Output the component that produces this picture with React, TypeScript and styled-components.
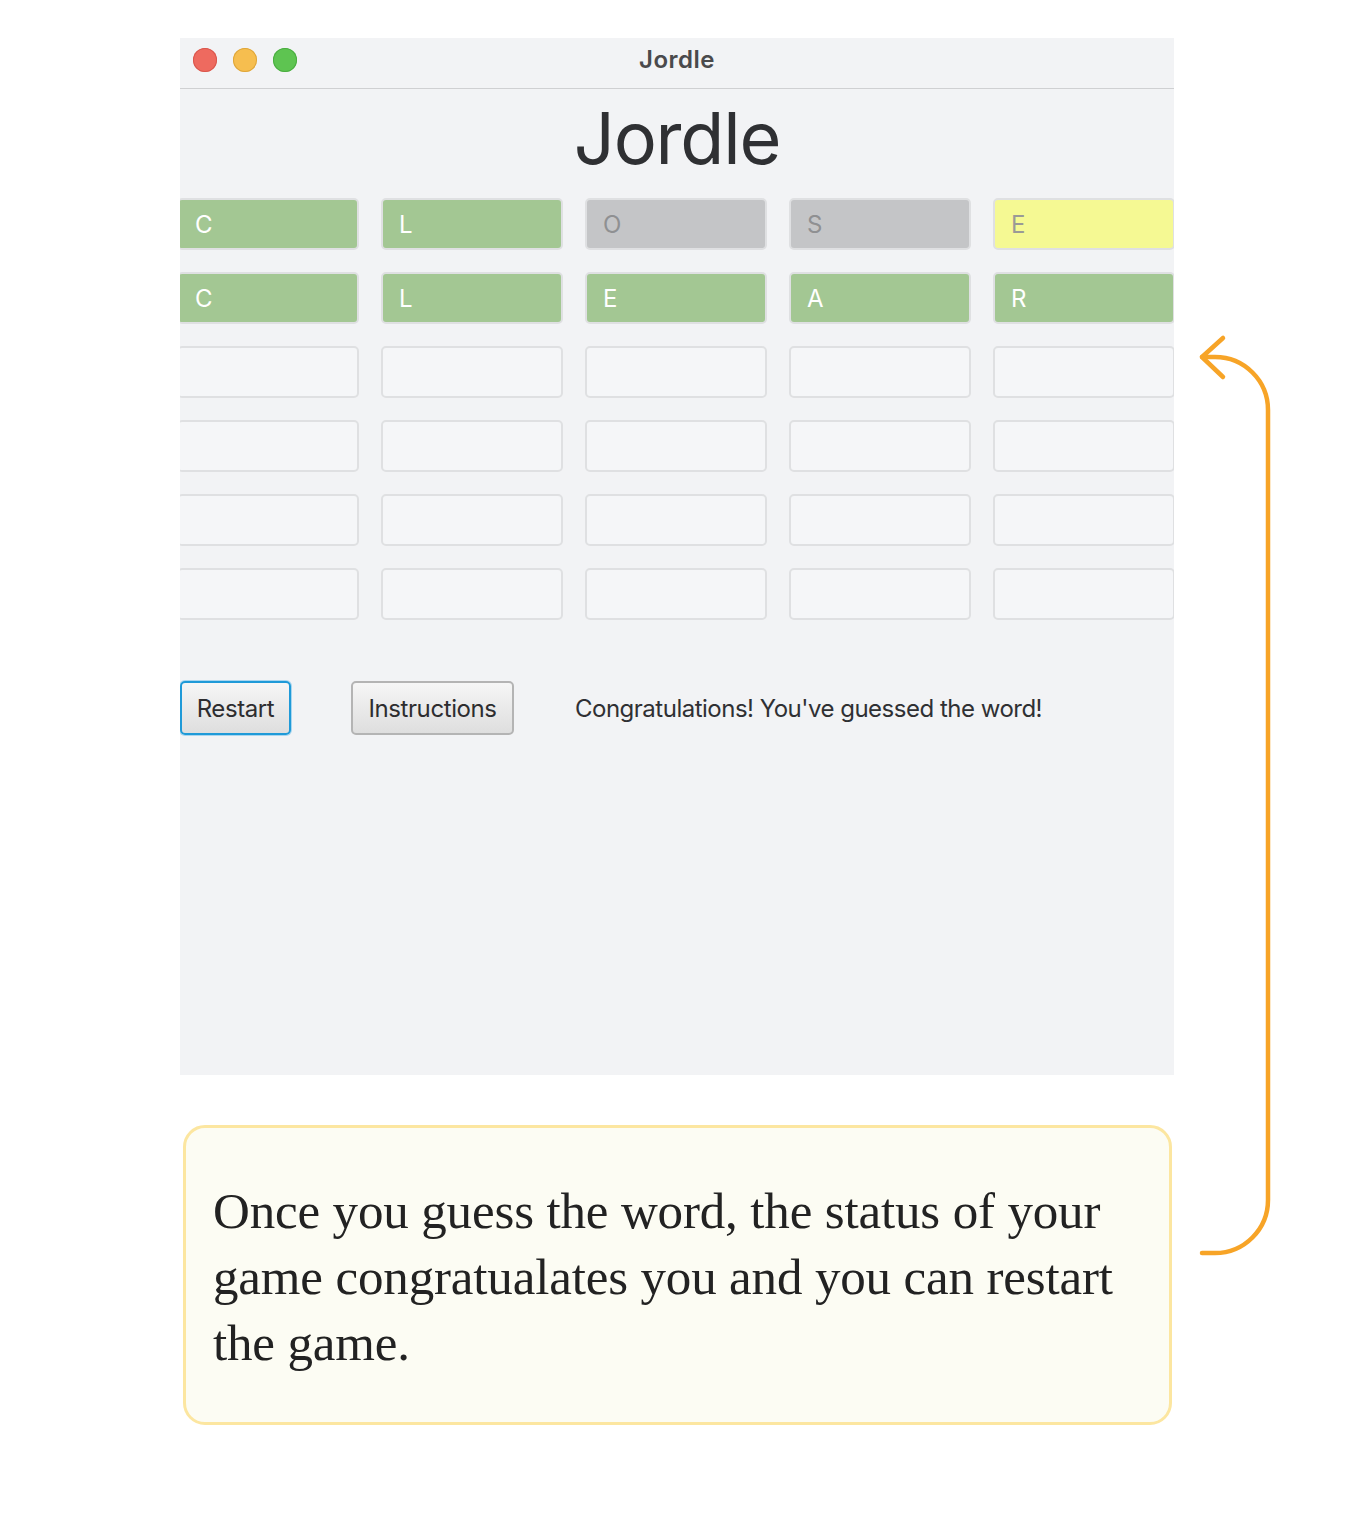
import React from "react";
import styled, { createGlobalStyle, css } from "styled-components";

type TileKind = "correct" | "present" | "absent" | "empty";

const rows: { letter: string; kind: TileKind }[][] = [
  [
    { letter: "C", kind: "correct" },
    { letter: "L", kind: "correct" },
    { letter: "O", kind: "absent" },
    { letter: "S", kind: "absent" },
    { letter: "E", kind: "present" },
  ],
  [
    { letter: "C", kind: "correct" },
    { letter: "L", kind: "correct" },
    { letter: "E", kind: "correct" },
    { letter: "A", kind: "correct" },
    { letter: "R", kind: "correct" },
  ],
  ...Array.from({ length: 4 }, () =>
    Array.from({ length: 5 }, () => ({ letter: "", kind: "empty" as TileKind }))
  ),
];

const GlobalStyle = createGlobalStyle`
  html, body {
    margin: 0;
    padding: 0;
    background: #ffffff;
  }
  body {
    font-family: Inter, "Noto Sans", sans-serif;
  }
`;

const Page = styled.div`
  display: flex;
  flex-direction: row;
  align-items: flex-start;
  padding: 38px 0 0 180px;
  width: 1355px;
  height: 1530px;
  box-sizing: border-box;
`;

const Column = styled.div`
  display: flex;
  flex-direction: column;
  width: 994px;
`;

// app window
const Window = styled.div`
  height: 1037px;
  background: #f2f3f5;
  overflow: hidden;
  display: flex;
  flex-direction: column;
`;

const TitleBar = styled.div`
  position: relative;
  height: 51px;
  flex: 0 0 auto;
  display: flex;
  align-items: center;
  justify-content: center;
  border-bottom: 1px solid #cfd0d2;
  box-sizing: border-box;
`;

const Lights = styled.div`
  position: absolute;
  left: 13px;
  top: 10px;
  display: flex;
  gap: 16px;
`;

const Light = styled.span<{ $color: string; $edge: string }>`
  width: 24px;
  height: 24px;
  border-radius: 50%;
  background: ${(p) => p.$color};
  box-shadow: inset 0 0 0 1px ${(p) => p.$edge};
`;

const WindowTitle = styled.div`
  font-size: 24px;
  font-weight: 600;
  letter-spacing: 0.5px;
  color: #4a4a4c;
  margin-top: -8px;
`;

const Heading = styled.h1`
  margin: 0;
  height: 109px;
  font-size: 72px;
  font-weight: 400;
  color: #2f3033;
  text-align: center;
  line-height: 98px;
  letter-spacing: -1.2px;
`;

const Board = styled.div`
  display: grid;
  grid-template-columns: repeat(5, 182px);
  grid-auto-rows: 52px;
  column-gap: 22px;
  row-gap: 22px;
  margin-left: -3px;
`;

const tileColors = {
  correct: css`
    background: #a3c793;
    color: #ffffff;
  `,
  present: css`
    background: #f5f993;
    color: #9a9a96;
  `,
  absent: css`
    background: #c4c5c7;
    color: #8f9092;
  `,
  empty: css`
    background: #f5f6f8;
    color: #333;
  `,
};

const Tile = styled.div<{ $kind: TileKind }>`
  height: 52px;
  box-sizing: border-box;
  border: 2px solid #dfe0e2;
  border-radius: 5px;
  display: flex;
  align-items: center;
  padding-left: 16px;
  font-size: 24px;
  ${(p) => tileColors[p.$kind]}
`;

const Controls = styled.div`
  display: flex;
  align-items: center;
  margin-top: 61px;
  height: 54px;
`;

const Button = styled.button<{ $focused?: boolean }>`
  height: 54px;
  box-sizing: border-box;
  padding: 0;
  font-family: Inter, "Noto Sans", sans-serif;
  font-size: 24px;
  letter-spacing: -0.4px;
  color: #2d2d2f;
  background: linear-gradient(#f6f6f6, #dedede);
  border: 2px solid #b4b4b4;
  border-radius: 5px;
  ${(p) =>
    p.$focused &&
    css`
      border-color: #1f9ad8;
      box-shadow: 0 0 0 1px #a9d6ef;
    `}
`;

const RestartButton = styled(Button)`
  width: 111px;
`;

const InstructionsButton = styled(Button)`
  width: 163px;
  margin-left: 60px;
`;

const Status = styled.div`
  margin-left: 61px;
  font-size: 24px;
  letter-spacing: -0.5px;
  color: #2f3033;
`;

// caption card under the window
const Caption = styled.div`
  margin: 50px 0 0 3px;
  width: 989px;
  height: 300px;
  box-sizing: border-box;
  border: 3px solid #fce6a0;
  border-radius: 22px;
  background: #fcfcf3;
  padding: 50px 20px 0 27px;
  font-family: "Liberation Serif", "DejaVu Serif", serif;
  font-size: 51px;
  line-height: 66px;
  color: #222222;
  letter-spacing: -0.15px;
`;

const Arrow = styled.svg`
  margin: 292px 0 0 21px;
  flex: 0 0 auto;
`;

export default function App() {
  return (
    <>
      <GlobalStyle />
      <Page>
        <Column>
          <Window>
            <TitleBar>
              <Lights>
                <Light $color="#ee6a5f" $edge="#d9574d" />
                <Light $color="#f6be4f" $edge="#dea63b" />
                <Light $color="#5ec451" $edge="#4aad40" />
              </Lights>
              <WindowTitle>Jordle</WindowTitle>
            </TitleBar>
            <Heading>Jordle</Heading>
            <Board>
              {rows.map((row, r) =>
                row.map((t, c) => (
                  <Tile key={`${r}-${c}`} $kind={t.kind}>
                    {t.letter}
                  </Tile>
                ))
              )}
            </Board>
            <Controls>
              <RestartButton $focused>Restart</RestartButton>
              <InstructionsButton>Instructions</InstructionsButton>
              <Status>Congratulations! You've guessed the word!</Status>
            </Controls>
          </Window>
          <Caption>
            Once you guess the word, the status of your game congratualates you
            and you can restart the game.
          </Caption>
        </Column>
        <Arrow width="82" height="935" viewBox="0 0 82 935">
          <g
            fill="none"
            stroke="#f7a427"
            strokeWidth="4.5"
            strokeLinecap="round"
            strokeLinejoin="round"
          >
            <path d="M28 8 L7 27 L28 47" />
            <path d="M7 27 L20 27 A53 53 0 0 1 73 80 L73 870 A53 53 0 0 1 20 923 L7 923" />
          </g>
        </Arrow>
      </Page>
    </>
  );
}
